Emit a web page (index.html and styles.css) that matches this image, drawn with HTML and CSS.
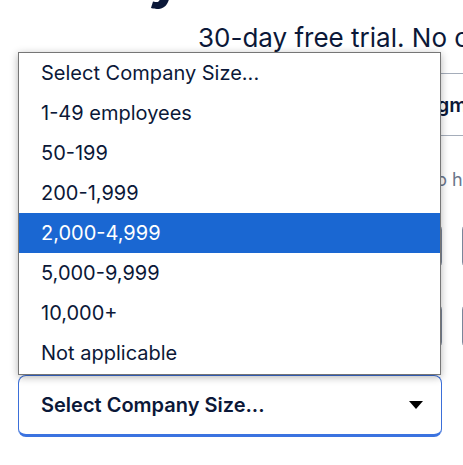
FILE: index.html
```html
<!DOCTYPE html>
<html lang="en">
<head>
<meta charset="utf-8">
<title>Sign up</title>
<link rel="stylesheet" href="styles.css">
</head>
<body>
<div class="page">
  <h1 class="hero-title">Try it free</h1>
  <p class="subtitle">30-day free trial. No credit card required.</p>
  <div class="form">
    <div class="tabs"><span class="tab-label">Segment</span></div>
    <p class="hint">We use this to help set up your account</p>
    <div class="grid">
      <div class="input"></div>
      <div class="input"></div>
      <div class="input"></div>
      <div class="input"></div>
    </div>
    <div class="field">
      <ul class="listbox">
        <li class="option">Select Company Size...</li>
        <li class="option">1-49 employees</li>
        <li class="option">50-199</li>
        <li class="option">200-1,999</li>
        <li class="option option-active">2,000-4,999</li>
        <li class="option">5,000-9,999</li>
        <li class="option">10,000+</li>
        <li class="option">Not applicable</li>
      </ul>
      <div class="select">
        <span class="select-value">Select Company Size...</span>
        <svg class="select-arrow" width="14" height="8" viewBox="0 0 14 8"><path d="M0 0H14L7 8Z" fill="#000"/></svg>
      </div>
    </div>
  </div>
</div>
</body>
</html>
```
FILE: styles.css
```css
* { box-sizing: border-box; }
html, body { margin: 0; padding: 0; }
body {
  width: 463px;
  height: 465px;
  overflow: hidden;
  background: #fff;
  font-family: Inter, "Noto Sans", sans-serif;
  color: #0b1838;
}
.page { position: relative; }
.hero-title {
  margin: -49px 0 0;
  padding-left: 91px;
  font-size: 54px;
  line-height: 56px;
  font-weight: 800;
  white-space: nowrap;
}
.subtitle {
  margin: 15px 0 0;
  padding-left: 198px;
  font-size: 26px;
  line-height: 32px;
  white-space: nowrap;
}
.form { padding-left: 18px; }
.tabs {
  margin-top: 19px;
  height: 63px;
  border-top: 1px solid #a5adba;
  border-bottom: 1px solid #a5adba;
  display: flex;
  align-items: center;
  padding-left: 394px;
  white-space: nowrap;
}
.tab-label { font-size: 20px; font-weight: 600; }
.hint {
  margin: 32px 0 0;
  padding-left: 309px;
  font-size: 18px;
  line-height: 24px;
  color: #6b778c;
  white-space: nowrap;
}
.grid {
  margin-top: 30px;
  display: grid;
  grid-template-columns: 424px 424px;
  column-gap: 20px;
  row-gap: 32px;
  width: 900px;
}
.input {
  height: 48px;
  border: 1px solid #7a869a;
  border-radius: 8px;
}
.field {
  position: relative;
  margin-top: 25px;
  width: 424px;
}
.select {
  height: 62px;
  border: 1px solid #3b6fd9;
  border-bottom: 3px solid #3b73e0;
  border-radius: 8px;
  display: flex;
  align-items: center;
  justify-content: space-between;
  padding: 0 18px 0 22px;
  font-size: 20px;
  font-weight: 600;
  background: #fff;
}
.listbox {
  position: absolute;
  left: 0;
  bottom: 100%;
  width: 423px;
  margin: 0;
  padding: 0 0 1px;
  list-style: none;
  background: #fff;
  border: 1px solid #767676;
  box-shadow: 0 2px 8px rgba(0, 0, 0, 0.3);
  z-index: 2;
}
.option {
  height: 40px;
  display: flex;
  align-items: center;
  padding-left: 22px;
  font-size: 20px;
  white-space: nowrap;
}
.option-active { background: #1a67d2; color: #fff; }
```
